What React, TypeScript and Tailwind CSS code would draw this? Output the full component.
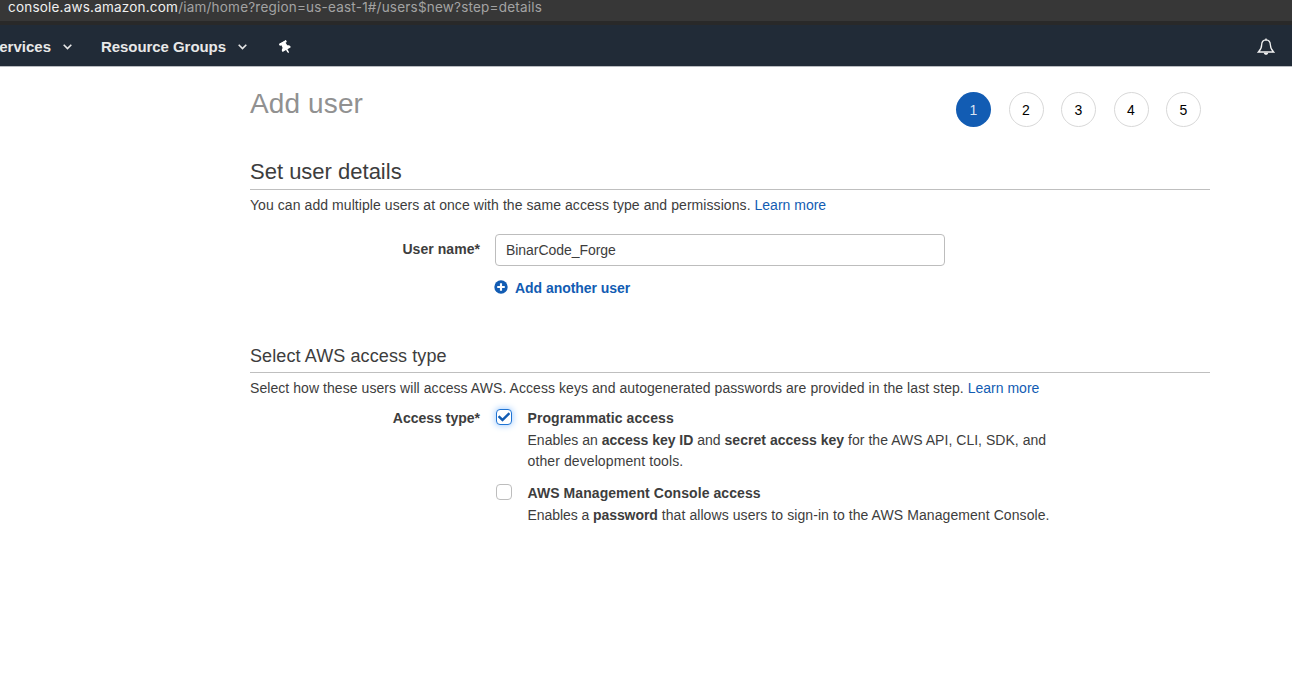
import React from "react";
import { FaCheck, FaThumbtack } from "react-icons/fa";

const steps = [1, 2, 3, 4, 5];

function Caret() {
  return (
    <svg className="h-[6px] w-[9px]" viewBox="0 0 9 6" fill="none" stroke="#e8e8e8" strokeWidth="1.6">
      <path d="M0.7 0.8 4.5 4.6 8.3 0.8" />
    </svg>
  );
}

function Bell() {
  return (
    <svg className="h-[18px] w-[18px]" viewBox="0 0 18 18" fill="none" stroke="#f2f2f2" strokeWidth="1.3">
      <path d="M9 1.9C6.2 2.1 4.7 4 4.7 6.6C4.7 10.8 3.5 12 1.4 14H16.6C14.5 12 13.3 10.8 13.3 6.6C13.3 4 11.8 2.1 9 1.9Z" />
      <path d="M9 0.4V2" />
      <path d="M6.8 14.7H11.2C11 16.2 10.2 16.7 9 16.7C7.8 16.7 7 16.2 6.8 14.7Z" fill="#f2f2f2" stroke="none" />
    </svg>
  );
}

function Checkbox({ checked = false }: { checked?: boolean }) {
  return checked ? (
    <span role="checkbox" aria-checked="true" className="flex h-4 w-4 items-center justify-center rounded-[4px] border border-[#1f74d4] bg-white shadow-[0_0_6px_1px_#a9d1ff]">
      <FaCheck className="h-3 w-3 text-[#125cb3]" />
    </span>
  ) : (
    <span role="checkbox" aria-checked="false" className="block h-4 w-4 rounded-[4px] border border-[#bdbdbd] bg-white" />
  );
}

export default function App() {
  return (
    <div className="h-[690px] w-[1292px] overflow-hidden bg-white font-['Liberation_Sans',Arial,sans-serif] text-sm whitespace-nowrap text-[#3d3d3d]">
      <div className="h-[25px] border-b-4 border-[#292929] bg-[#373737] pl-2 font-[Inter,sans-serif] text-[13.5px] leading-[14px] tracking-[0.21px] text-[#a3a3a3]">
        <span className="text-[#f0f0f0]">console.aws.amazon.com</span>/iam/home?region=us-east-1#/users$new?step=details
      </div>
      <nav className="flex h-[42px] items-center border-b border-[#b9bcc0] bg-[#212b37] pt-[3px] text-[15px] font-bold text-[#e8e8e8]">
        <div className="flex w-[63px] justify-end pr-3">ervices</div>
        <Caret />
        <div className="mr-3 ml-[29px] w-[125px] tracking-[-0.06px]">Resource Groups</div>
        <Caret />
        <FaThumbtack className="ml-[33px] h-[13px] w-[11px] -rotate-[30deg] text-white" />
        <div className="mr-[17px] ml-auto"><Bell /></div>
      </nav>

      <main className="ml-[250px] w-[960px]">
        <header className="flex h-[90px] items-start justify-between pt-[25px] pr-[9px]">
          <h1 className="-mt-[4px] text-[28px] leading-8 tracking-[0.12px] text-[#919191]">Add user</h1>
          <ol className="flex gap-[17.5px] text-black">
            {steps.map((n) => (
              <li key={n} className={n === 1 ? "flex h-[35px] w-[35px] items-center justify-center rounded-full bg-[#125cb3] text-[#d8e4f2]" : "flex h-[35px] w-[35px] items-center justify-center rounded-full border border-[#d8d8d8]"}>
                {n}
              </li>
            ))}
          </ol>
        </header>

        <section className="h-[184px]">
          <h2 className="h-[33px] border-b border-[#bfbfbf] text-[22px] leading-[30px]">Set user details</h2>
          <p className="pt-[5px] leading-5 tracking-[0.07px]">
            You can add multiple users at once with the same access type and permissions. <a className="tracking-normal text-[#125cb3]">Learn more</a>
          </p>
          <div className="mt-[19px] flex">
            <label className="w-[230px] text-right leading-[30px] font-bold tracking-[0.05px]">User name*</label>
            <div className="ml-[15px]">
              <div className="h-8 w-[450px] rounded-[4px] border border-[#bdbdbd] pl-[10px] leading-[30px] tracking-[-0.05px]">BinarCode_Forge</div>
              <div className="mt-3 flex items-center font-bold leading-5 tracking-[-0.04px] text-[#125cb3]">
                <svg className="-mt-[2px] mr-[7px] -ml-px h-[14px] w-[14px]" viewBox="0 0 13 13">
                  <circle cx="6.5" cy="6.5" r="6.2" fill="#125cb3" />
                  <path d="M6.5 3V10M3 6.5H10" stroke="white" strokeWidth="2" />
                </svg>
                Add another user
              </div>
            </div>
          </div>
        </section>

        <section>
          <h2 className="h-[32px] border-b border-[#bfbfbf] text-[18px] leading-[30px] tracking-[0.1px]">Select AWS access type</h2>
          <p className="pt-[5px] leading-5 tracking-[0.063px]">
            Select how these users will access AWS. Access keys and autogenerated passwords are provided in the last step. <a className="tracking-normal text-[#125cb3]">Learn more</a>
          </p>
          <div className="mt-[10px] flex leading-5">
            <div className="w-[230px] text-right font-bold">Access type*</div>
            <div className="ml-4">
              <div className="flex">
                <div className="mr-[15.5px] pt-px"><Checkbox checked /></div>
                <div>
                  <div className="font-bold tracking-[0.08px]">Programmatic access</div>
                  <p className="pt-[2px] leading-[21px] tracking-[0.03px]">
                    Enables an <b className="tracking-[-0.03px]">access key ID</b> and <b>secret access key</b> for the AWS API, CLI, SDK, and<br /><span className="tracking-[0.1px]">other development tools.</span>
                  </p>
                </div>
              </div>
              <div className="mt-[11px] flex">
                <div className="mr-[15.5px] pt-px"><Checkbox /></div>
                <div>
                  <div className="font-bold tracking-[0.07px]">AWS Management Console access</div>
                  <p className="pt-[2px] leading-[21px] tracking-[0.08px]"><span className="tracking-[-0.07px]">Enables a <b>password</b></span> that allows users to sign-in to the AWS Management Console.</p>
                </div>
              </div>
            </div>
          </div>
        </section>
      </main>
    </div>
  );
}
